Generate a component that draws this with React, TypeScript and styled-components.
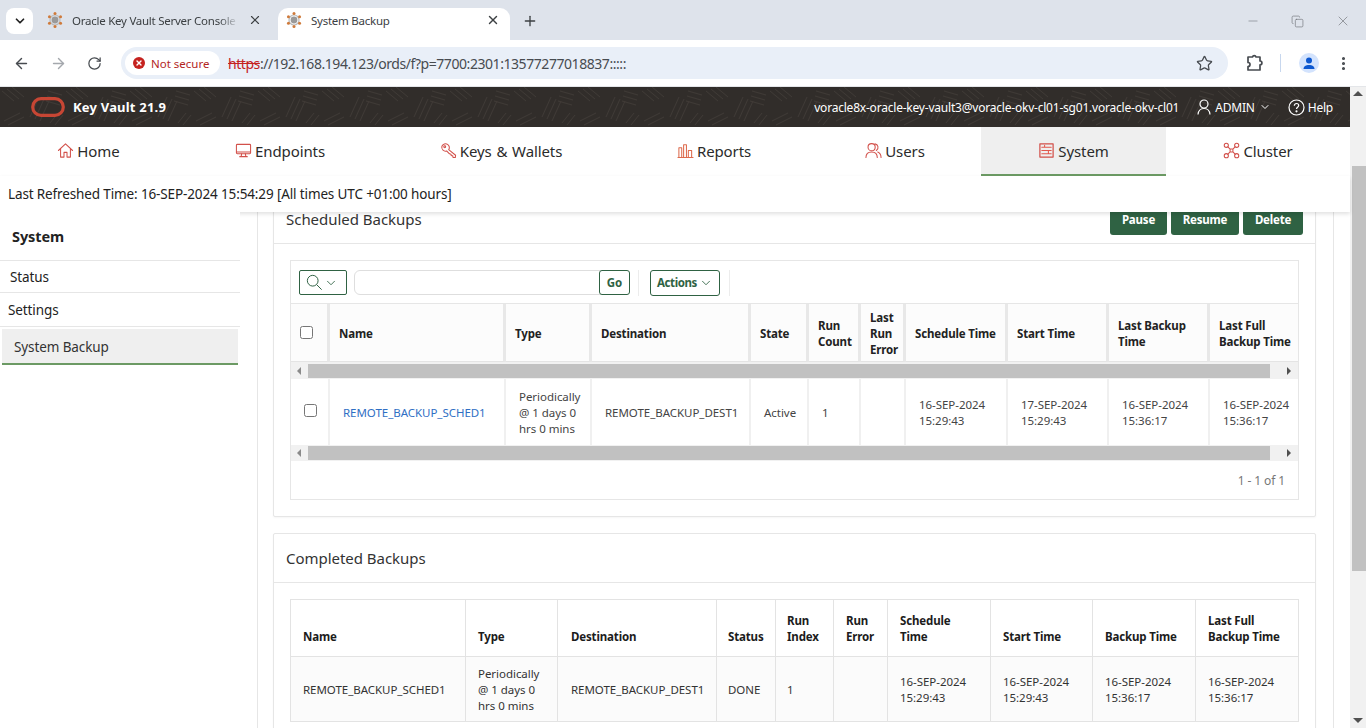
import React from "react";
import styled, { createGlobalStyle } from "styled-components";
import {
  ArrowLeft,
  ArrowRight,
  ChevronDown,
  Copy,
  EllipsisVertical,
  Minus,
  Plus,
  RotateCw,
  Star,
  X,
} from "lucide-react";

const FONT = `"Noto Sans", "Open Sans", sans-serif`;

const scheduledCols = "39px 176px 86px 159px 58px 52px 45px 102px 101px 101px 88px";
const completedCols = "175px 92px 159px 59px 58px 54px 103px 102px 103px 102px";

const GlobalStyle = createGlobalStyle`
  html, body {
    margin: 0;
    height: 100%;
    overflow: hidden;
    background: #fff;
  }
  body {
    font-family: ${FONT};
    font-size: 12px;
    color: #222;
  }
  * { box-sizing: border-box; }
`;

const Page = styled.div`
  display: flex;
  flex-direction: column;
  width: 1366px;
  height: 728px;
  overflow: hidden;
`;

/* ---- browser chrome ---- */
const TabStrip = styled.div`
  display: flex;
  align-items: flex-start;
  height: 40px;
  flex: none;
  padding: 8px 0 0 6px;
  background: #dee3eb;
`;
const TabMenu = styled.div`
  display: flex;
  align-items: center;
  justify-content: center;
  width: 27px;
  height: 26px;
  border-radius: 8px;
  background: #fff;
  color: #222;
`;
const Tab = styled.div<{ $active?: boolean }>`
  display: flex;
  align-items: center;
  gap: 9px;
  width: 232px;
  height: 32px;
  padding: ${(p) => (p.$active ? "0 10px 8px 8px" : "0 11px 8px 6px")};
  margin-left: ${(p) => (p.$active ? "5px" : "8px")};
  border-radius: 10px 10px 0 0;
  background: ${(p) => (p.$active ? "#fff" : "transparent")};
  color: #3c4043;
  font-size: 11.5px;
  letter-spacing: -0.25px;
`;
const TabTitle = styled.span<{ $fade?: boolean }>`
  flex: 1;
  white-space: nowrap;
  overflow: hidden;
  ${(p) =>
    p.$fade &&
    `-webkit-mask-image: linear-gradient(90deg, #000 88%, transparent);
     mask-image: linear-gradient(90deg, #000 88%, transparent);`}
`;
const NewTab = styled.div`
  display: flex;
  align-items: center;
  height: 26px;
  margin-left: 12px;
  color: #3c4043;
`;
const WindowControls = styled.div`
  display: flex;
  align-items: center;
  gap: 31px;
  margin-left: auto;
  padding: 5px 15px 0 0;
  color: #6f7378;
`;
const Toolbar = styled.div`
  display: flex;
  align-items: center;
  height: 47px;
  flex: none;
  padding: 0 10px 0 13px;
  background: #fff;
  border-radius: 10px 10px 0 0;
  border-bottom: 1px solid #e4e6e9;
  color: #474b50;
`;
const NavIcons = styled.div`
  display: flex;
  align-items: center;
  gap: 20px;
  width: 108px;
  flex: none;
`;
const Omnibox = styled.div`
  display: flex;
  align-items: center;
  width: 1107px;
  height: 32px;
  flex: none;
  padding: 0 15px 0 4px;
  border-radius: 16px;
  background: #e9eff8;
`;
const SecureChip = styled.div`
  display: flex;
  align-items: center;
  gap: 6px;
  height: 24px;
  width: 95px;
  padding-left: 8px;
  border-radius: 12px;
  background: #fff;
  color: #b3261e;
  font-size: 11.5px;
  white-space: nowrap;
`;
const ErrorDot = styled.span`
  display: flex;
  align-items: center;
  justify-content: center;
  width: 12px;
  height: 12px;
  border-radius: 50%;
  background: #c5221f;
  color: #fff;
`;
const Url = styled.div`
  flex: 1;
  padding-left: 8px;
  font-size: 14px;
  letter-spacing: -0.44px;
  color: #474b50;
  white-space: nowrap;
`;
const Strike = styled.span`
  color: #c5221f;
  text-decoration: line-through;
`;
const ToolbarEnd = styled.div`
  display: flex;
  align-items: center;
  margin-left: 17px;
`;
const ToolbarDivider = styled.span`
  width: 1px;
  height: 18px;
  margin: 0 18px 0 17px;
  background: #c7d7ee;
`;
const Avatar = styled.span`
  display: flex;
  align-items: center;
  justify-content: center;
  width: 20px;
  height: 20px;
  margin-right: 16px;
  border-radius: 50%;
  background: #d3e3fd;
`;

/* ---- application ---- */
const Workspace = styled.div`
  display: flex;
  flex: 1;
  min-height: 0;
`;
const Viewport = styled.div`
  display: flex;
  flex-direction: column;
  width: 1350px;
  flex: none;
  min-height: 0;
`;
const PageScroll = styled.div`
  display: flex;
  flex-direction: column;
  align-items: flex-end;
  flex: 1;
  padding-top: 4px;
  background: #f1f1f1;
`;
const ScrollThumb = styled.div`
  width: 14px;
  height: 405px;
  margin-top: 70px;
  background: #c1c1c1;
`;
const TriangleUp = styled.span`
  width: 0;
  margin-right: 3px;
  border: 5px solid transparent;
  border-top: 0;
  border-bottom: 5px solid #505050;
`;
const TriangleDown = styled.span`
  width: 0;
  margin: auto 3px 5px 0;
  border: 5px solid transparent;
  border-bottom: 0;
  border-top: 5px solid #505050;
`;

const AppHeader = styled.header`
  position: relative;
  display: flex;
  align-items: center;
  height: 40px;
  flex: none;
  padding: 0 17px 0 31px;
  background: #312d2a;
  color: #fff;
  overflow: hidden;
`;
const HeaderTexture = styled.svg`
  position: absolute;
  inset: 0;
  width: 100%;
  height: 100%;
`;
const HeaderInner = styled.div`
  position: relative;
  display: flex;
  align-items: center;
  flex: 1;
`;
const Brand = styled.div`
  margin-left: 8px;
  font-size: 13px;
  font-weight: 700;
  letter-spacing: 0.2px;
`;
const HeaderRight = styled.div`
  display: flex;
  align-items: center;
  margin-left: auto;
  font-size: 12px;
  letter-spacing: -0.21px;
`;
const HeaderLink = styled.div<{ $gap: number; $left: number }>`
  display: flex;
  align-items: center;
  gap: ${(p) => p.$gap}px;
  margin-left: ${(p) => p.$left}px;
`;

const NavBar = styled.nav`
  display: grid;
  grid-template-columns: 177px 206px 236px 190px 172px 185px 184px;
  height: 49px;
  flex: none;
  background: #fff;
`;
const NavItem = styled.div<{ $active?: boolean }>`
  display: flex;
  align-items: center;
  justify-content: center;
  gap: 3px;
  font-size: 15px;
  letter-spacing: -0.1px;
  word-spacing: 1px;
  color: #2b2b2b;
  background: ${(p) => (p.$active ? "#efefef" : "transparent")};
  border-bottom: 2px solid ${(p) => (p.$active ? "#6c9a64" : "transparent")};
`;
const RefreshBar = styled.div`
  position: relative;
  z-index: 2;
  display: flex;
  align-items: center;
  height: 36px;
  flex: none;
  padding: 0 0 0 8px;
  font-size: 13.5px;
  letter-spacing: -0.13px;
  background: #fff;
  box-shadow: 0 2px 4px rgba(0, 0, 0, 0.12);
`;
const Body = styled.div`
  display: flex;
  flex: 1;
  min-height: 0;
`;
const Sidebar = styled.aside`
  position: relative;
  z-index: 3;
  width: 240px;
  flex: none;
  background: #fff;
`;
const SideTitle = styled.div`
  height: 49px;
  padding: 14px 0 0 12px;
  font-size: 14.5px;
  font-weight: 700;
  letter-spacing: -0.1px;
  border-bottom: 1px solid #e6e6e6;
`;
const SideRow = styled.div<{ $indent: number; $height: number }>`
  display: flex;
  align-items: center;
  height: ${(p) => p.$height}px;
  padding: 1px 0 0 ${(p) => p.$indent}px;
  font-size: 13.5px;
  letter-spacing: -0.1px;
  border-bottom: 1px solid #e6e6e6;
`;
const SideActive = styled.div`
  display: flex;
  align-items: center;
  height: 36px;
  margin: 2px 2px 0;
  padding: 1px 0 0 12px;
  font-size: 13.5px;
  letter-spacing: -0.1px;
  color: #333;
  background: #efefef;
  border-bottom: 2px solid #6c9a64;
`;
const Main = styled.main`
  width: 1077px;
  flex: none;
  margin-left: 17px;
  padding: 0 17px 0 15px;
  overflow: hidden;
  border-left: 1px solid #e6e6e6;
  border-right: 1px solid #e6e6e6;
`;
const ScrolledContent = styled.div`
  display: flex;
  flex-direction: column;
  gap: 16px;
  margin-top: -18px;
`;
const Card = styled.section`
  flex: none;
  background: #fff;
  border: 1px solid #e6e6e6;
  border-radius: 2px;
  box-shadow: 0 1px 2px rgba(0, 0, 0, 0.04);
`;
const CardHead = styled.div`
  display: flex;
  align-items: center;
  height: 49px;
  padding: 0 12px 0 12px;
  border-bottom: 1px solid #e6e6e6;
`;
const CardTitle = styled.h2`
  margin: 0;
  font-size: 15px;
  font-weight: 400;
  line-height: 14px;
  letter-spacing: -0.03px;
  color: #333;
`;
const HeadButtons = styled.div`
  display: flex;
  gap: 4px;
  margin: 1px 0 0 auto;
`;
const SolidButton = styled.div<{ $w: number }>`
  display: flex;
  align-items: center;
  justify-content: center;
  width: ${(p) => p.$w}px;
  height: 30px;
  border-radius: 3px;
  background: #2f6243;
  color: #fff;
  font-size: 11.5px;
  font-weight: 700;
  letter-spacing: -0.2px;
`;
const CardBody = styled.div`
  padding: 16px 16px 16px;
`;
const ReportFrame = styled.div`
  border: 1px solid #e6e6e6;
`;
const ReportBar = styled.div`
  display: flex;
  align-items: center;
  height: 43px;
  padding: 1px 0 0 8px;
  border-bottom: 1px solid #e6e6e6;
`;
const SearchBtn = styled.div`
  display: flex;
  align-items: center;
  justify-content: center;
  gap: 1px;
  width: 48px;
  height: 25px;
  padding-right: 3px;
  border: 1px solid #2f6243;
  border-radius: 2px;
  color: #2f6243;
`;
const SearchField = styled.div`
  display: flex;
  align-items: stretch;
  justify-content: flex-end;
  width: 276px;
  height: 25px;
  margin-left: 7px;
  border: 1px solid #dedede;
  border-radius: 6px;
`;
const GoBtn = styled.div`
  display: flex;
  align-items: center;
  justify-content: center;
  width: 31px;
  margin: -1px;
  border: 1px solid #2f6243;
  border-radius: 3px;
  color: #2f6243;
  font-size: 11.5px;
  font-weight: 700;
  background: #fff;
`;
const BarSep = styled.span<{ $left: number }>`
  width: 1px;
  height: 26px;
  margin-left: ${(p) => p.$left}px;
  background: #ececec;
`;
const ActionsBtn = styled.div`
  display: flex;
  align-items: center;
  justify-content: center;
  gap: 2px;
  width: 70px;
  height: 26px;
  margin-left: 11px;
  border: 1px solid #2f6243;
  border-radius: 3px;
  color: #2f6243;
  font-size: 11.5px;
  font-weight: 700;
  letter-spacing: -0.4px;
`;
const Row = styled.div<{ $cols: string; $height: number }>`
  display: grid;
  grid-template-columns: ${(p) => p.$cols};
  height: ${(p) => p.$height}px;
`;
const HeadCell = styled.div`
  display: flex;
  align-items: center;
  padding: 2px 2px 0 9px;
  background: #fcfcfc;
  border-right: 3px solid #e8e8e8;
  border-bottom: 1px solid #e4e4e4;
  font-size: 11.5px;
  font-weight: 700;
  line-height: 16px;
  letter-spacing: -0.15px;
  color: #222;
  &:last-child { border-right: 0; }
`;
const HeadCheck = styled(HeadCell)`
  padding-top: 0;
`;
const BodyCell = styled.div`
  display: flex;
  align-items: center;
  padding: 2px 2px 0 13px;
  border-right: 2px solid #f0f0f0;
  font-size: 11.5px;
  line-height: 16px;
  letter-spacing: -0.04px;
  color: #444;
  &:last-child { border-right: 0; }
`;
const CheckCell = styled(BodyCell)`
  padding: 0 2px 3px 13px;
`;
const NativeCheck = styled.input`
  width: 13px;
  height: 13px;
  margin: 0;
`;
const LinkText = styled.span`
  color: #2f6fc4;
`;
const HScroll = styled.div<{ $height: number }>`
  display: flex;
  align-items: center;
  height: ${(p) => p.$height}px;
  background: #f1f1f1;
`;
const HThumb = styled.div`
  width: 962px;
  height: 14px;
  margin: 0 17px 0 7px;
  background: #c1c1c1;
`;
const TriangleLeft = styled.span`
  width: 0;
  margin-left: 6px;
  border: 4px solid transparent;
  border-left: 0;
  border-right: 4px solid #8a8a8a;
`;
const TriangleRight = styled.span`
  width: 0;
  border: 4px solid transparent;
  border-right: 0;
  border-left: 4px solid #505050;
`;
const Pager = styled.div`
  display: flex;
  align-items: center;
  justify-content: flex-end;
  height: 38px;
  padding-right: 13px;
  color: #777;
  font-size: 12px;
  letter-spacing: -0.1px;
`;
const PlainTable = styled.div`
  border: 1px solid #e3e3e3;
  border-bottom: 0;
`;
const PlainHead = styled.div`
  display: flex;
  align-items: flex-end;
  padding: 0 12px 11px 12px;
  border-right: 1px solid #e3e3e3;
  border-bottom: 1px solid #e3e3e3;
  background: #fff;
  font-size: 11.5px;
  font-weight: 700;
  line-height: 16px;
  letter-spacing: -0.15px;
  color: #1c1c1c;
  &:nth-child(3) { padding-left: 13px; }
  &:nth-child(4), &:nth-child(5) { padding-left: 11px; padding-right: 2px; }
  &:last-child { border-right: 0; }
`;
const PlainCell = styled.div`
  display: flex;
  align-items: center;
  padding: 2px 10px 0 12px;
  border-right: 1px solid #e3e3e3;
  border-bottom: 1px solid #e3e3e3;
  background: #fbfbfb;
  font-size: 11.5px;
  line-height: 16px;
  letter-spacing: -0.04px;
  color: #333;
  &:nth-child(3) { padding-left: 13px; }
  &:nth-child(4), &:nth-child(5) { padding-left: 11px; padding-right: 2px; }
  &:last-child { border-right: 0; }
`;

/* ---- drawings ---- */
const Favicon = () => (
  <svg width="16" height="16" viewBox="0 0 16 16">
    <circle cx="8" cy="8" r="3.4" fill="#9a9a9a" />
    <circle cx="8" cy="8" r="5" fill="none" stroke="#b9b9b9" strokeWidth="1.2" />
    {[0, 60, 120, 180, 240, 300].map((a) => (
      <circle
        key={a}
        cx={8 + 6.4 * Math.sin((a * Math.PI) / 180)}
        cy={8 - 6.4 * Math.cos((a * Math.PI) / 180)}
        r="1.5"
        fill="#cf7a3a"
      />
    ))}
  </svg>
);

const NavSvg = ({ children, size = 17 }: { children: React.ReactNode; size?: number }) => (
  <svg
    width={size}
    height={size}
    viewBox="0 0 18 18"
    fill="none"
    stroke="#d2504a"
    strokeWidth="1.1"
    strokeLinecap="round"
    strokeLinejoin="round"
  >
    {children}
  </svg>
);

const HomeIcon = () => (
  <NavSvg>
    <path d="M1.500 9 9 2l7.500 7" />
    <path d="M3.800 7.500V16h3.600v-5h3.200v5h3.600V7.500" />
  </NavSvg>
);
const EndpointIcon = () => (
  <NavSvg>
    <rect x="1.500" y="2.500" width="15" height="10" rx="1" />
    <path d="M1.500 10.500h15M7 12.500l-.5 3M11 12.500l.5 3M5 15.500h8" />
  </NavSvg>
);
const KeyIcon = () => (
  <NavSvg>
    <path d="M2 4.500C3 2 6 1 8 2.500s2.500 4 1.200 5.600L16.500 14l-.3 2.500-2.400-.2-.3-1.600-1.600-.3-.3-1.500-1.600-.4-3-3C4.500 10.500 1 8 2 4.500Z" />
    <circle cx="5" cy="5" r="1" />
  </NavSvg>
);
const ReportIcon = () => (
  <NavSvg>
    <path d="M2 16V6h3v10M7 16V3h3v13M12 16V9h3.500v7M1 16.500h16" stroke="#dd6a4c" />
  </NavSvg>
);
const UsersIcon = () => (
  <NavSvg>
    <circle cx="7" cy="5.500" r="3.800" />
    <path d="M1 16.500c0-4 2.500-6 6-6s6 2 6 6" />
    <path d="M10.500 2a3.800 3.800 0 0 1 1.500 7M13.500 10.500c2 .8 3.500 2.800 3.500 6" />
  </NavSvg>
);
const SystemIcon = () => (
  <NavSvg>
    <rect x="2" y="2" width="14" height="14" strokeWidth="1.300" />
    <path d="M4 5.500h10M4 9h10M4 12.500h10M7 3.500v2M11 9v3.500" stroke="#e2574c" />
  </NavSvg>
);
const ClusterIcon = () => (
  <NavSvg>
    <circle cx="3.500" cy="3.500" r="2.200" />
    <circle cx="14.500" cy="3.500" r="2.200" />
    <circle cx="3.500" cy="14.500" r="2.200" />
    <circle cx="14.500" cy="14.500" r="2.200" />
    <path d="M5.200 5.200 7.500 7.500h3l2.300-2.300M5.200 12.800 7.500 10.500h3l2.300 2.300M7.500 7.500v3M10.500 7.500v3" />
  </NavSvg>
);
const OracleMark = () => (
  <svg width="34" height="20" viewBox="0 0 34 20">
    <rect x="1.700" y="1.700" width="30.600" height="16.600" rx="8.300" fill="none" stroke="#c74634" strokeWidth="3.200" />
  </svg>
);
const HeaderPattern = () => (
  <HeaderTexture aria-hidden="true">
    <defs>
      <pattern id="weave" width="64" height="40" patternUnits="userSpaceOnUse">
        <g stroke="#3f3a36" strokeWidth="1" fill="none">
          <path d="M2 4l12 10M7 2l12 10M12 0l12 10" />
          <path d="M30 30l9-20M35 32l9-20M40 34l9-20" />
          <path d="M48 4l14 4M47 9l14 4M46 14l14 4" />
          <path d="M4 34l16-8M8 38l16-8" />
          <path d="M50 36l8-10M55 38l8-10" />
        </g>
      </pattern>
    </defs>
    <rect width="100%" height="100%" fill="url(#weave)" />
  </HeaderTexture>
);
const UserGlyph = () => (
  <svg width="14" height="16" viewBox="0 0 14 16" fill="none" stroke="#fff" strokeWidth="1.200">
    <circle cx="7" cy="5" r="4" />
    <path d="M1 15.500c.3-3.500 2.500-6 6-6s5.700 2.500 6 6" />
  </svg>
);
const HelpGlyph = () => (
  <svg width="17" height="17" viewBox="0 0 17 17" fill="none" stroke="#fff" strokeWidth="1.200">
    <circle cx="8.500" cy="8.500" r="7.500" />
    <path d="M6.300 6.700c0-1.400 1-2.200 2.200-2.200s2.200.8 2.200 2c0 1.700-2.200 1.700-2.200 3.500" />
    <circle cx="8.500" cy="12.300" r=".5" fill="#fff" />
  </svg>
);
const SearchGlyph = () => (
  <svg width="17" height="17" viewBox="0 0 19 19" fill="none" stroke="#2f6243" strokeWidth="1.100">
    <circle cx="7.500" cy="7.500" r="6" />
    <path d="M12 12l5.500 5.500" />
  </svg>
);
const ProfileGlyph = () => (
  <svg width="14" height="14" viewBox="0 0 14 14" fill="#0b57d0">
    <circle cx="7" cy="4.500" r="3" />
    <path d="M1.500 13c0-2.800 2.500-4 5.500-4s5.500 1.200 5.500 4Z" />
  </svg>
);
const ExtensionGlyph = () => (
  <svg width="18" height="18" viewBox="0 0 18 18" fill="none" stroke="#474b50" strokeWidth="1.700" strokeLinejoin="round">
    <path d="M3 3h4.500a1.800 1.800 0 0 1 3.500 0H15v4a1.900 1.900 0 0 1 0 3.800V16H3v-3.500a2 2 0 0 0 0-4Z" />
  </svg>
);

const scheduledHead = [
  "Name",
  "Type",
  "Destination",
  "State",
  "Run Count",
  "Last Run Error",
  "Schedule Time",
  "Start Time",
  "Last Backup Time",
  "Last Full Backup Time",
];
const completedHead = [
  "Name",
  "Type",
  "Destination",
  "Status",
  "Run Index",
  "Run Error",
  "Schedule Time",
  "Start Time",
  "Backup Time",
  "Last Full Backup Time",
];
const period = "Periodically @ 1 days 0 hrs 0 mins";

const App = () => {
  return (
    <Page>
      <GlobalStyle />
      <TabStrip>
        <TabMenu>
          <ChevronDown size={14} strokeWidth={3} />
        </TabMenu>
        <Tab>
          <Favicon />
          <TabTitle $fade>Oracle Key Vault Server Console</TabTitle>
          <X size={14} strokeWidth={2} />
        </Tab>
        <Tab $active>
          <Favicon />
          <TabTitle>System Backup</TabTitle>
          <X size={14} strokeWidth={2.4} />
        </Tab>
        <NewTab>
          <Plus size={16} strokeWidth={2} />
        </NewTab>
        <WindowControls>
          <Minus size={14} strokeWidth={1} />
          <Copy size={13} strokeWidth={1.2} />
          <X size={16} strokeWidth={1} />
        </WindowControls>
      </TabStrip>
      <Toolbar>
        <NavIcons>
          <ArrowLeft size={17} strokeWidth={2} />
          <ArrowRight size={17} strokeWidth={2} color="#a4a8ad" />
          <RotateCw size={15} strokeWidth={2} />
        </NavIcons>
        <Omnibox>
          <SecureChip>
            <ErrorDot>
              <X size={8} strokeWidth={4} />
            </ErrorDot>
            Not secure
          </SecureChip>
          <Url>
            <Strike>https</Strike>://192.168.194.123/ords/f?p=7700:2301:13577277018837:::::
          </Url>
          <Star size={17} strokeWidth={1.8} />
        </Omnibox>
        <ToolbarEnd>
          <ExtensionGlyph />
          <ToolbarDivider />
          <Avatar>
            <ProfileGlyph />
          </Avatar>
          <EllipsisVertical size={17} strokeWidth={2.4} />
        </ToolbarEnd>
      </Toolbar>
      <Workspace>
        <Viewport>
          <AppHeader>
            <HeaderPattern />
            <HeaderInner>
              <OracleMark />
              <Brand>Key Vault 21.9</Brand>
              <HeaderRight>
                voracle8x-oracle-key-vault3@voracle-okv-cl01-sg01.voracle-okv-cl01
                <HeaderLink $gap={4} $left={18}>
                  <UserGlyph />
                  ADMIN
                  <ChevronDown size={12} strokeWidth={2} />
                </HeaderLink>
                <HeaderLink $gap={3} $left={17}>
                  <HelpGlyph />
                  Help
                </HeaderLink>
              </HeaderRight>
            </HeaderInner>
          </AppHeader>
          <NavBar>
            <NavItem><HomeIcon />Home</NavItem>
            <NavItem><EndpointIcon />Endpoints</NavItem>
            <NavItem><KeyIcon />Keys &amp; Wallets</NavItem>
            <NavItem><ReportIcon />Reports</NavItem>
            <NavItem><UsersIcon />Users</NavItem>
            <NavItem $active><SystemIcon />System</NavItem>
            <NavItem><ClusterIcon />Cluster</NavItem>
          </NavBar>
          <RefreshBar>Last Refreshed Time: 16-SEP-2024 15:54:29 [All times UTC +01:00 hours]</RefreshBar>
          <Body>
            <Sidebar>
              <SideTitle>System</SideTitle>
              <SideRow $indent={10} $height={32}>Status</SideRow>
              <SideRow $indent={8} $height={34}>Settings</SideRow>
              <SideActive>System Backup</SideActive>
            </Sidebar>
            <Main>
              <ScrolledContent>
                <Card>
                  <CardHead>
                    <CardTitle>Scheduled Backups</CardTitle>
                    <HeadButtons>
                      <SolidButton $w={57}>Pause</SolidButton>
                      <SolidButton $w={68}>Resume</SolidButton>
                      <SolidButton $w={60}>Delete</SolidButton>
                    </HeadButtons>
                  </CardHead>
                  <CardBody>
                    <ReportFrame>
                      <ReportBar>
                        <SearchBtn>
                          <SearchGlyph />
                          <ChevronDown size={14} strokeWidth={1.5} />
                        </SearchBtn>
                        <SearchField>
                          <GoBtn>Go</GoBtn>
                        </SearchField>
                        <BarSep $left={8} />
                        <ActionsBtn>
                          Actions
                          <ChevronDown size={14} strokeWidth={1.5} />
                        </ActionsBtn>
                        <BarSep $left={9} />
                      </ReportBar>
                      <Row $cols={scheduledCols} $height={58}>
                        <HeadCheck>
                          <NativeCheck type="checkbox" />
                        </HeadCheck>
                        {scheduledHead.map((h) => (
                          <HeadCell key={h}>{h}</HeadCell>
                        ))}
                      </Row>
                      <HScroll $height={17}>
                        <TriangleLeft />
                        <HThumb />
                        <TriangleRight />
                      </HScroll>
                      <Row $cols={scheduledCols} $height={66}>
                        <CheckCell>
                          <NativeCheck type="checkbox" />
                        </CheckCell>
                        <BodyCell>
                          <LinkText>REMOTE_BACKUP_SCHED1</LinkText>
                        </BodyCell>
                        <BodyCell>{period}</BodyCell>
                        <BodyCell>REMOTE_BACKUP_DEST1</BodyCell>
                        <BodyCell>Active</BodyCell>
                        <BodyCell>1</BodyCell>
                        <BodyCell />
                        <BodyCell>16-SEP-2024 15:29:43</BodyCell>
                        <BodyCell>17-SEP-2024 15:29:43</BodyCell>
                        <BodyCell>16-SEP-2024 15:36:17</BodyCell>
                        <BodyCell>16-SEP-2024 15:36:17</BodyCell>
                      </Row>
                      <HScroll $height={16}>
                        <TriangleLeft />
                        <HThumb />
                        <TriangleRight />
                      </HScroll>
                      <Pager>1 - 1 of 1</Pager>
                    </ReportFrame>
                  </CardBody>
                </Card>
                <Card>
                  <CardHead>
                    <CardTitle>Completed Backups</CardTitle>
                  </CardHead>
                  <CardBody>
                    <PlainTable>
                      <Row $cols={completedCols} $height={57}>
                        {completedHead.map((h) => (
                          <PlainHead key={h}>{h}</PlainHead>
                        ))}
                      </Row>
                      <Row $cols={completedCols} $height={65}>
                        <PlainCell>REMOTE_BACKUP_SCHED1</PlainCell>
                        <PlainCell>{period}</PlainCell>
                        <PlainCell>REMOTE_BACKUP_DEST1</PlainCell>
                        <PlainCell>DONE</PlainCell>
                        <PlainCell>1</PlainCell>
                        <PlainCell />
                        <PlainCell>16-SEP-2024 15:29:43</PlainCell>
                        <PlainCell>16-SEP-2024 15:29:43</PlainCell>
                        <PlainCell>16-SEP-2024 15:36:17</PlainCell>
                        <PlainCell>16-SEP-2024 15:36:17</PlainCell>
                      </Row>
                    </PlainTable>
                  </CardBody>
                </Card>
              </ScrolledContent>
            </Main>
          </Body>
        </Viewport>
        <PageScroll>
          <TriangleUp />
          <ScrollThumb />
          <TriangleDown />
        </PageScroll>
      </Workspace>
    </Page>
  );
};

export default App;
